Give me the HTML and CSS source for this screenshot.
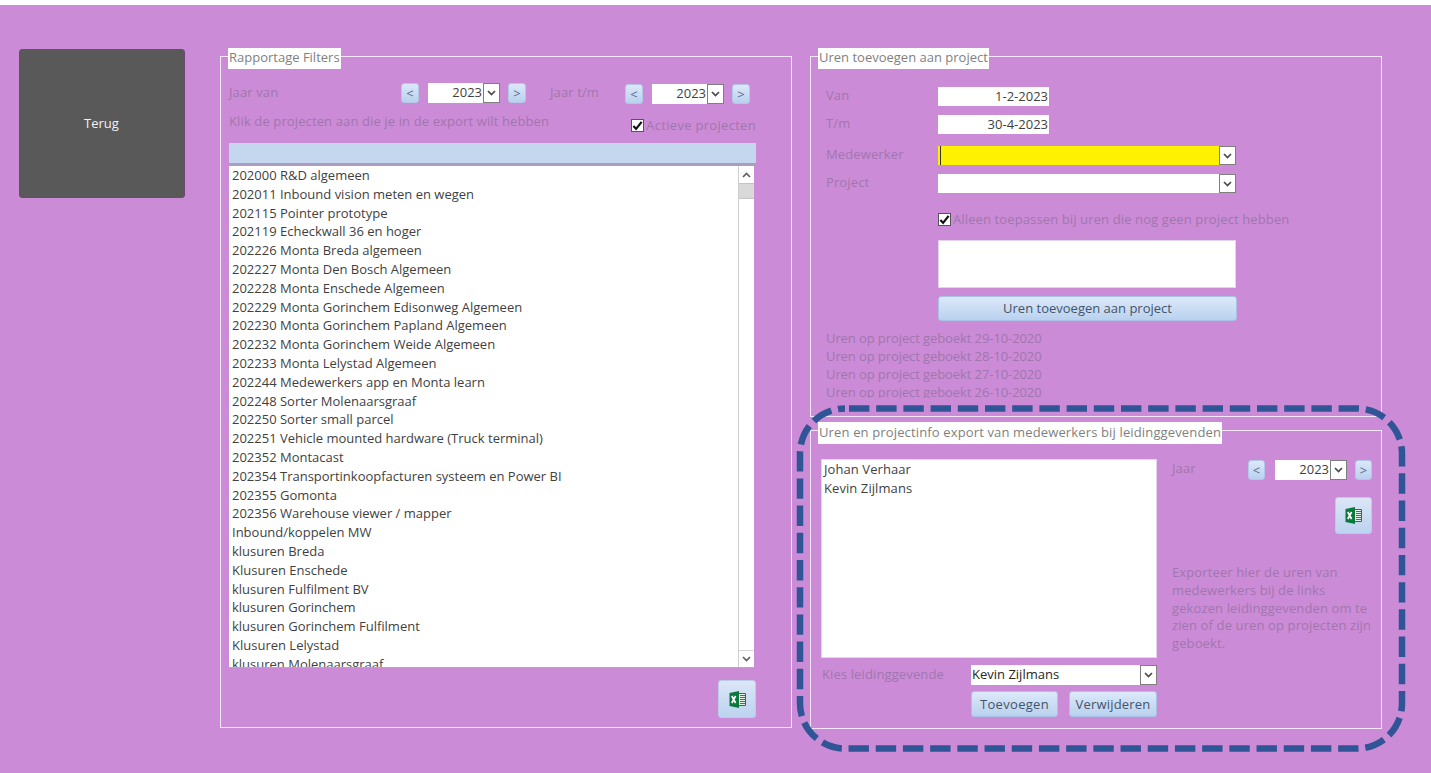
FILE: index.html
```html
<!DOCTYPE html>
<html lang="nl">
<head>
<meta charset="utf-8">
<title>Rapportage</title>
<link rel="stylesheet" href="styles.css">
</head>
<body>
<svg width="0" height="0" class="defs">
  <symbol id="chev" viewBox="0 0 9 6"><path d="M1 1l3.5 3.5L8 1" fill="none" stroke="currentColor" stroke-width="1.7"/></symbol>
  <symbol id="tick" viewBox="0 0 12 12"><path d="M1.5 6.5l3 3.2L10.5 2" fill="none" stroke="#111" stroke-width="2.4"/></symbol>
  <symbol id="excel" viewBox="0 0 17 17">
    <path d="M6 2.5h10.5v12H6z" fill="#e3f1e8" stroke="#1d7a45" stroke-width="1"/>
    <path d="M11 4.5h5M11 6.5h5M11 8.5h5M11 10.5h5M11 12.5h5" stroke="#1f8a50" stroke-width="1"/>
    <path d="M.5 2L10 0v17l-9.500-2z" fill="#0a7a3c"/>
    <path d="M2.800 5l3.800 7M6.600 5l-3.800 7" stroke="#fff" stroke-width="1.700" fill="none"/>
  </symbol>
</svg>
<div class="top-strip"></div>
<main class="form">
  <button class="back-button">Terug</button>

  <section class="panel panel-filters">
    <div class="panel-title">Rapportage Filters</div>
    <div class="filters-body">
      <div class="year-row">
        <span class="label year-from">Jaar van</span>
        <div class="stepper">
          <button class="step">&lt;</button>
          <div class="combo"><span class="field field-num">2023</span><span class="drop"><svg class="chev"><use href="#chev"/></svg></span></div>
          <button class="step">&gt;</button>
        </div>
        <span class="label year-to">Jaar t/m</span>
        <div class="stepper stepper-low">
          <button class="step">&lt;</button>
          <div class="combo"><span class="field field-num">2023</span><span class="drop"><svg class="chev"><use href="#chev"/></svg></span></div>
          <button class="step">&gt;</button>
        </div>
      </div>
      <div class="hint-row">
        <span class="label hint">Klik de projecten aan die je in de export wilt hebben</span>
        <span class="check-line check-active"><span class="check"><svg><use href="#tick"/></svg></span><span class="label">Actieve projecten</span></span>
      </div>
      <div class="list-header"></div>
      <div class="project-list">
        <div class="project-items">
          <div>202000 R&amp;D algemeen</div>
          <div>202011 Inbound vision meten en wegen</div>
          <div>202115 Pointer prototype</div>
          <div>202119 Echeckwall 36 en hoger</div>
          <div>202226 Monta Breda algemeen</div>
          <div>202227 Monta Den Bosch Algemeen</div>
          <div>202228 Monta Enschede Algemeen</div>
          <div>202229 Monta Gorinchem Edisonweg Algemeen</div>
          <div>202230 Monta Gorinchem Papland Algemeen</div>
          <div>202232 Monta Gorinchem Weide Algemeen</div>
          <div>202233 Monta Lelystad Algemeen</div>
          <div>202244 Medewerkers app en Monta learn</div>
          <div>202248 Sorter Molenaarsgraaf</div>
          <div>202250 Sorter small parcel</div>
          <div>202251 Vehicle mounted hardware (Truck terminal)</div>
          <div>202352 Montacast</div>
          <div>202354 Transportinkoopfacturen systeem en Power BI</div>
          <div>202355 Gomonta</div>
          <div>202356 Warehouse viewer / mapper</div>
          <div>Inbound/koppelen MW</div>
          <div>klusuren Breda</div>
          <div>Klusuren Enschede</div>
          <div>klusuren Fulfilment BV</div>
          <div>klusuren Gorinchem</div>
          <div>klusuren Gorinchem Fulfilment</div>
          <div>Klusuren Lelystad</div>
          <div>klusuren Molenaarsgraaf</div>
        </div>
        <div class="scrollbar">
          <span class="scroll-btn"><svg class="chev chev-up"><use href="#chev"/></svg></span>
          <span class="scroll-thumb"></span>
          <span class="scroll-track"></span>
          <span class="scroll-btn scroll-btn-end"><svg class="chev"><use href="#chev"/></svg></span>
        </div>
      </div>
      <button class="excel-button excel-filters"><svg><use href="#excel"/></svg></button>
    </div>
  </section>

  <div class="right-column">
    <section class="panel panel-hours">
      <div class="panel-title">Uren toevoegen aan project</div>
      <div class="hours-body">
        <div class="field-row"><span class="label field-label">Van</span><span class="field field-num field-date">1-2-2023</span></div>
        <div class="field-row"><span class="label field-label">T/m</span><span class="field field-num field-date">30-4-2023</span></div>
        <div class="field-row field-row-sep"><span class="label field-label">Medewerker</span>
          <div class="combo combo-wide"><span class="field field-yellow"><span class="caret"></span></span><span class="drop"><svg class="chev"><use href="#chev"/></svg></span></div></div>
        <div class="field-row"><span class="label field-label">Project</span>
          <div class="combo combo-wide"><span class="field"></span><span class="drop"><svg class="chev"><use href="#chev"/></svg></span></div></div>
        <div class="check-line check-only"><span class="check"><svg><use href="#tick"/></svg></span><span class="label">Alleen toepassen bij uren die nog geen project hebben</span></div>
        <div class="memo"></div>
        <button class="action action-wide">Uren toevoegen aan project</button>
        <div class="label log">
          <div>Uren op project geboekt 29-10-2020</div>
          <div>Uren op project geboekt 28-10-2020</div>
          <div>Uren op project geboekt 27-10-2020</div>
          <div>Uren op project geboekt 26-10-2020</div>
        </div>
      </div>
    </section>

    <section class="panel panel-export">
      <div class="panel-title">Uren en projectinfo export van medewerkers bij leidinggevenden</div>
      <div class="export-body">
        <div class="export-top">
          <div class="manager-list">
            <div>Johan Verhaar</div>
            <div>Kevin Zijlmans</div>
          </div>
          <div class="export-side">
            <div class="export-year">
              <span class="label export-year-label">Jaar</span>
              <div class="stepper stepper-narrow">
                <button class="step">&lt;</button>
                <div class="combo"><span class="field field-num">2023</span><span class="drop"><svg class="chev"><use href="#chev"/></svg></span></div>
                <button class="step">&gt;</button>
              </div>
            </div>
            <button class="excel-button excel-export"><svg><use href="#excel"/></svg></button>
            <p class="label export-note">Exporteer hier de uren van medewerkers bij de links gekozen leidinggevenden om te zien of de uren op projecten zijn geboekt.</p>
          </div>
        </div>
        <div class="manager-row">
          <span class="label manager-label">Kies leidinggevende</span>
          <div class="combo combo-manager"><span class="field field-dark">Kevin Zijlmans</span><span class="drop"><svg class="chev"><use href="#chev"/></svg></span></div>
        </div>
        <div class="manager-actions">
          <button class="action action-add">Toevoegen</button>
          <button class="action action-remove">Verwijderen</button>
        </div>
      </div>
    </section>
  </div>
</main>
<svg class="highlight" width="1431" height="773" viewBox="0 0 1431 773">
  <rect x="800" y="408.5" width="602" height="340" rx="45" ry="45" fill="none" stroke="#2f5597" stroke-width="6.5" stroke-dasharray="20.4 6.8" stroke-dashoffset="-4"/>
</svg>
</body>
</html>
```
FILE: styles.css
```css
* { box-sizing: border-box; }
html, body { margin: 0; height: 773px; overflow: hidden; }
body {
  background: #cc8bd6;
  font-family: "Open Sans", "Noto Sans", sans-serif;
  font-size: 13px;
  color: #3f3f3f;
  position: relative;
}
.defs { position: absolute; }
.top-strip { height: 5px; background: #fff; }
.form { display: flex; align-items: flex-start; padding: 44px 0 0 19px; }
button { font: inherit; padding: 0; cursor: pointer; }

.back-button {
  width: 166px; height: 149px; margin-right: 35px; padding: 0 1px 2px 0;
  background: #595959; color: #f2f2f2;
  border: 1px solid #6a4a70; border-radius: 3px;
}

.panel { border: 1px solid #f3e6f6; }
.panel-title {
  width: fit-content; height: 21px; margin: -9px 0 0 7px; padding: 0 1px;
  background: #fff; color: #7f7f7f; line-height: 19px;
}
.label { color: #9f77ae; letter-spacing: .12px; }

.panel-filters { width: 572px; height: 672px; margin-top: 7px; margin-right: 18px; }
.filters-body { padding: 14px 35px 0 8px; }
.year-row { display: flex; height: 21px; line-height: 19px; }
.year-from { width: 172px; }
.year-to { width: 75px; margin-left: 24px; }

.stepper { display: flex; }
.stepper-low { margin-top: 1px; }
.stepper .combo { width: 72px; margin: 0 8px 0 9px; }
.step {
  width: 18px; height: 20px; line-height: 17px; color: #5b6b8a;
  background: linear-gradient(#dbe8f9, #b9d1ee);
  border: 1px solid #b3c8e6; border-radius: 3px;
}
.combo { display: flex; height: 20px; }
.field {
  flex: 1; display: block; height: 100%; background: #fff; color: #3f3f3f;
  line-height: 19px; white-space: nowrap;
}
.field-num { text-align: right; padding-right: 1px; }
.drop {
  width: 17px; height: 100%; display: flex; align-items: center; justify-content: center;
  background: #fff; border: 1px solid #7f7f7f; color: #4a4a4a;
}
.chev { width: 9px; height: 6px; display: block; }
.chev-up { transform: rotate(180deg); }

.hint-row { display: flex; height: 32px; margin-top: 7px; }
.hint { line-height: 20px; }
.check-line { display: flex; align-items: center; height: 20px; }
.check-active { margin: 4px 0 0 auto; letter-spacing: .3px; }
.check-active .label { letter-spacing: .3px; }
.check {
  width: 13px; height: 13px; margin-right: 2px; background: #fff;
  border: 1px solid #555;
}
.check svg { display: block; width: 11px; height: 11px; }

.list-header {
  height: 22px; background: #c5d7ef; border-bottom: 2px solid #ac9cc0;
}
.project-list {
  display: flex; width: 525px; height: 502px; margin-top: 1px;
  background: #fff; border-bottom: 1px solid #b7a6bf; overflow: hidden;
}
.project-items { flex: 1; padding-left: 3px; line-height: 18.8px; white-space: nowrap; overflow: hidden; }
.scrollbar { width: 16px; display: flex; flex-direction: column; border-left: 1px solid #cfcfcf; }
.scroll-btn { height: 17px; display: flex; align-items: center; justify-content: center; color: #606060; }
.scroll-btn-end { border-top: 1px solid #d6d6d6; }
.scroll-thumb { height: 16px; background: #d9d9d9; border: 1px solid #c4c4c4; border-width: 1px 0; }
.scroll-track { flex: 1; }

.excel-button {
  display: flex; align-items: center; justify-content: center;
  background: linear-gradient(#dce6f7, #bcd3ef);
  border: 1px solid #bccce8; border-radius: 3px;
}
.excel-button svg { width: 17px; height: 17px; }
.excel-filters { width: 38px; height: 38px; margin: 12px 0 0 auto; }

.right-column { width: 572px; margin-top: 7px; }
.panel-hours { height: 361px; margin-bottom: 13px; }
.hours-body { padding: 18px 0 0 15px; }
.field-row { display: flex; height: 19px; margin-bottom: 9px; }
.field-row-sep { margin-top: 12px; }
.field-label { width: 112px; line-height: 17px; }
.field-date { flex: none; width: 111px; height: 19px; }
.combo-wide { width: 298px; height: 19px; }
.field-yellow { background: #fff200; padding-left: 2px; }
.caret { display: block; width: 1px; height: 100%; background: #333; }
.check-only { margin: 16px 0 0 112px; }
.memo { width: 298px; height: 48px; margin: 11px 0 0 112px; background: #fff; border: 1px solid #e4d3ea; }
.action {
  color: #44546a; background: linear-gradient(#dce9f9, #b9d1ee);
  border: 1px solid #a9c2e6; border-radius: 3px;
}
.action-wide { display: block; width: 299px; height: 25px; margin: 8px 0 0 112px; padding-bottom: 2px; }
.log { height: 69px; margin-top: 8px; line-height: 18px; overflow: hidden; letter-spacing: -.09px; }

.panel-export { height: 299px; }
.panel-export .panel-title { height: 22px; line-height: 20px; letter-spacing: .14px; }
.export-body { padding: 15px 0 0 10px; }
.export-top { display: flex; }
.manager-list { width: 336px; height: 199px; padding: 0 2px; background: #fff; line-height: 18.8px; letter-spacing: .08px; border: 1px solid #e4d3ea; }
.export-side { width: 200px; margin-left: 15px; }
.export-year { display: flex; line-height: 18px; }
.export-year-label { width: 76px; }
.stepper-narrow { margin-top: 1px; }
.stepper-narrow .step { width: 17px; }
.stepper-narrow .combo { margin: 0 8px 0 10px; }
.excel-export { width: 37px; height: 37px; margin: 17px 0 0 auto; }
.export-note { margin: 30px 0 0; line-height: 17.8px; }
.manager-row { display: flex; margin-top: 7px; }
.manager-label { width: 150px; padding-left: 1px; line-height: 18px; }
.combo-manager { width: 186px; }
.field-dark { padding-left: 1px; color: #262626; }
.manager-actions { display: flex; gap: 11px; margin: 6px 0 0 150px; }
.action-add { width: 87px; height: 26px; letter-spacing: .3px; padding-bottom: 1px; }
.action-remove { width: 88px; height: 26px; letter-spacing: .2px; padding-bottom: 1px; }

.highlight { position: absolute; left: 0; top: 0; pointer-events: none; }
```
